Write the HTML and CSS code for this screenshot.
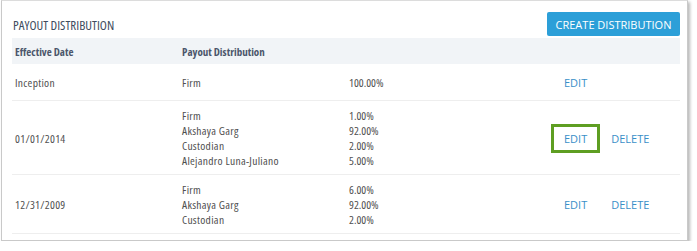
FILE: index.html
```html
<!DOCTYPE html>
<html>
<head>
<meta charset="utf-8">
<link rel="stylesheet" href="styles.css">
</head>
<body>
<div class="panel">
  <div class="panel-head">
    <h2 class="title">PAYOUT DISTRIBUTION</h2>
    <button class="btn">CREATE DISTRIBUTION</button>
  </div>
  <div class="table">
    <div class="row head">
      <div>Effective Date</div>
      <div>Payout Distribution</div>
      <div></div>
      <div></div>
    </div>
    <div class="row first">
      <div>Inception</div>
      <div class="lines"><span>Firm</span></div>
      <div class="lines pct"><span>100.00%</span></div>
      <div class="actions"><a class="link">EDIT</a></div>
    </div>
    <div class="row">
      <div>01/01/2014</div>
      <div class="lines"><span>Firm</span><span>Akshaya Garg</span><span>Custodian</span><span>Alejandro Luna-Juliano</span></div>
      <div class="lines pct"><span>1.00%</span><span>92.00%</span><span>2.00%</span><span>5.00%</span></div>
      <div class="actions"><a class="link highlight">EDIT</a><a class="link">DELETE</a></div>
    </div>
    <div class="row">
      <div>12/31/2009</div>
      <div class="lines"><span>Firm</span><span>Akshaya Garg</span><span>Custodian</span></div>
      <div class="lines pct"><span>6.00%</span><span>92.00%</span><span>2.00%</span></div>
      <div class="actions"><a class="link">EDIT</a><a class="link">DELETE</a></div>
    </div>
  </div>
</div>
</body>
</html>
```

FILE: styles.css
```css
* { box-sizing: border-box; }
html, body { margin: 0; padding: 0; background: #ffffff; }
body {
  font-family: "Open Sans", "Noto Sans", sans-serif;
  font-size: 11.5px;
  font-stretch: 75%;
  letter-spacing: 0.3px;
  color: #505050;
}
.panel {
  margin-left: 1px;
  width: 687px;
  height: 241px;
  border: 1px solid #c9c9c9;
  border-top-color: #dcdcdc;
  background: #fff;
  box-shadow: 2px 2px 3px rgba(0,0,0,0.28);
  padding: 0 7px 0 10px;
}
.panel-head {
  display: flex;
  justify-content: space-between;
  align-items: center;
  padding-top: 9px;
  height: 37px;
}
.title {
  margin: 0;
  font-weight: normal;
  font-size: 13px;
  font-stretch: 75%;
  letter-spacing: 0;
  color: #3e4c5e;
  padding-left: 1px;
  padding-top: 1px;
}
.btn {
  font-family: inherit;
  font-stretch: 92%;
  letter-spacing: 0;
  background: #2c9fd8;
  color: #fff;
  border: 0;
  border-radius: 2px;
  height: 24px;
  width: 133px;
  font-size: 11px;
  padding: 0;
}
.table { display: flex; flex-direction: column; }
.row {
  display: grid;
  grid-template-columns: 167px 167px 202px 1fr;
  align-items: center;
  padding: 7px 0 6px 3px;
  border-bottom: 1px solid #eeeeee;
  line-height: 15px;
}
.row.head {
  background: #f1f4f7;
  border-bottom: 0;
  height: 26px;
  padding-top: 0;
  padding-bottom: 0;
  font-size: 11px;
  letter-spacing: 0;
  font-weight: bold;
  color: #4b566b;
}
.row.first { height: 37px; padding-top: 0; padding-bottom: 0; }
.lines { display: flex; flex-direction: column; }
.pct { letter-spacing: 0; }
.actions { display: flex; gap: 12px; }
.link {
  color: #3b8fc8;
  font-size: 11px;
  font-stretch: 100%;
  letter-spacing: 0;
  padding: 0 6px;
  margin-left: 7px;
}
.link + .link { margin-left: 0; }
.highlight {
  outline: 3px solid #5e9e22;
  outline-offset: 4px;
}
```
